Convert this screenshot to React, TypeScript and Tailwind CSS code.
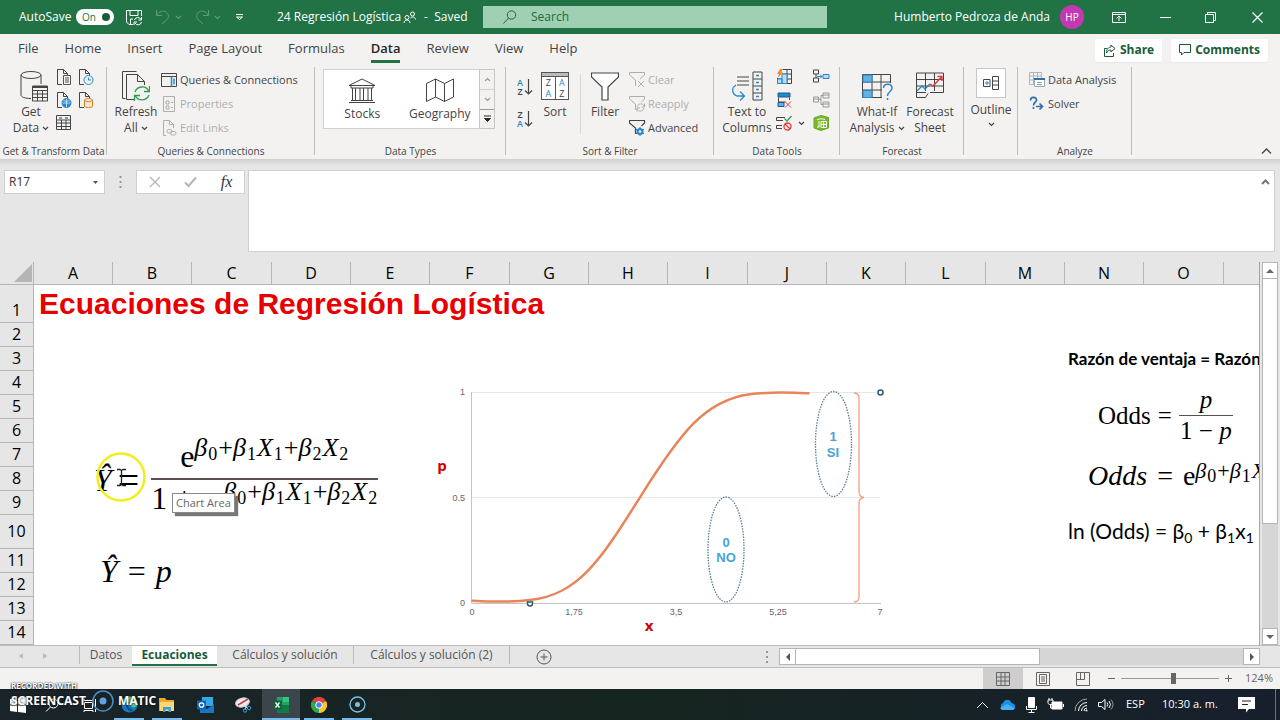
import type { ReactNode } from "react";

const columns = ["A", "B", "C", "D", "E", "F", "G", "H", "I", "J", "K", "L", "M", "N", "O"];

// Rows 1 and 10 are taller than the rest.
const rows = Array.from({ length: 14 }, (_, i) => i + 1);

const menuTabs = ["File", "Home", "Insert", "Page Layout", "Formulas", "Data", "Review", "View", "Help"];

function Icon({
  w = 16,
  h = 16,
  box,
  className = "",
  children,
}: {
  w?: number;
  h?: number;
  box?: string;
  className?: string;
  children: ReactNode;
}) {
  return (
    <svg
      width={w}
      height={h}
      viewBox={box ?? `0 0 ${w} ${h}`}
      fill="none"
      stroke="currentColor"
      aria-hidden="true"
      className={`shrink-0 ${className}`}
    >
      {children}
    </svg>
  );
}

function Chevron({ className = "" }: { className?: string }) {
  return (
    <Icon w={7} h={5} className={`inline-block ${className}`}>
      <path d="M1 1l2.500 2.500L6 1" strokeWidth="1.200" />
    </Icon>
  );
}

function TitleBar() {
  return (
    <header className="flex h-[34px] items-center bg-[#217346] text-[12px] text-white">
      <div className="flex w-[277px] shrink-0 items-center pl-[19px]">
        <label htmlFor="autosave" className="w-[57px]">
          AutoSave
        </label>
        <button
          id="autosave"
          role="switch"
          aria-checked="true"
          className="flex h-4 w-[38px] items-center justify-between rounded-full bg-white pl-1.5 pr-1 text-[10px] text-[#217346]"
        >
          On
          <span className="size-2 rounded-full bg-[#185c37]" />
        </button>
        <button aria-label="Save" className="ml-3">
          <Icon w={17} h={17}>
            <path d="M7 15.500H3L.5 13V1.500h15V7M4 1.500v5h8v-5M4.500 15.500V10H7" />
            <path d="M15.500 8v3h-3M8 16v-3h3M8.500 11a3.500 3.500 0 0 1 6.500-.5M15.500 13a3.500 3.500 0 0 1-6.500 1" />
          </Icon>
        </button>
        <button aria-label="Undo" className="ml-3 flex items-center gap-1 text-[#5c9c78]">
          <Icon w={16} h={16}>
            <path d="M1.500 1v5.500H7M2 6c2-3.500 6-5 9-3s3 5.500 1 7.500L7 15" />
          </Icon>
          <Chevron />
        </button>
        <button aria-label="Redo" className="ml-3 flex items-center gap-1 text-[#5c9c78]">
          <Icon w={16} h={16}>
            <path d="M14.500 1v5.500H9M14 6c-2-3.500-6-5-9-3s-3 5.500-1 7.500L9 15" />
          </Icon>
          <Chevron />
        </button>
        <button aria-label="Customize toolbar" className="ml-3.5">
          <Icon w={9} h={8}>
            <path d="M1 1.500h7M1.500 4l3 2.500 3-2.500z" />
          </Icon>
        </button>
      </div>
      <div className="flex w-[206px] shrink-0 items-center">
        <span>24 Regresión Logística</span>
        <Icon w={13} h={13} className="ml-0.5">
          <circle cx="4" cy="6.500" r="2" />
          <path d="M1 12c0-4 6-4 6 0" />
          <circle cx="9.500" cy="3" r="2" />
          <path d="M7.500 7c2-2 4.500-1 5 1.500" />
        </Icon>
        <span className="ml-2">-&nbsp; Saved</span>
      </div>
      <label className="flex h-[22px] max-w-[344px] flex-1 items-center bg-[#9fd0b3] pl-5 text-[#1d6b40]">
        <Icon w={14} h={14}>
          <circle cx="8.500" cy="5" r="4.200" />
          <path d="M5.500 8L.5 13.500" />
        </Icon>
        <input
          aria-label="Search"
          placeholder="Search"
          className="ml-3.5 w-full bg-transparent placeholder:text-[#1d6b40] focus:outline-none"
        />
      </label>
      <div className="ml-auto flex items-center pr-[17px]">
        <span>Humberto Pedroza de Anda</span>
        <span className="ml-2.5 flex size-6 items-center justify-center rounded-full bg-[#c239b3] text-[10px]">HP</span>
        <button aria-label="Ribbon display options" className="ml-7">
          <Icon w={14} h={11}>
            <path d="M.5.500h13v10H.5zM.5 2.500h13M7 9V4.500M4.500 6.500L7 4l2.500 2.500" />
          </Icon>
        </button>
        <button aria-label="Minimize" className="ml-[34px]">
          <Icon w={11} h={11}>
            <path d="M0 5.500h11" />
          </Icon>
        </button>
        <button aria-label="Restore" className="ml-[34px]">
          <Icon w={12} h={11}>
            <path d="M.5 2.500h8v8h-8zM2.500 2.500v-2h8v8h-2" />
          </Icon>
        </button>
        <button aria-label="Close" className="ml-[35px]">
          <Icon w={11} h={11}>
            <path d="M.5.500l10 10M10.500.500l-10 10" strokeWidth="1.200" />
          </Icon>
        </button>
      </div>
    </header>
  );
}

function MenuTabs() {
  return (
    <div className="flex h-8 items-center pl-[18px] pr-3 text-[13px]">
      <nav className="flex gap-[26px]">
        {menuTabs.map((tab) => (
          <button
            key={tab}
            className={
              tab === "Data"
                ? "h-[25px] border-b-3 border-[#217346] pb-0.5 font-semibold leading-5 text-[#262626]"
                : "h-[25px] border-b-3 border-transparent pb-0.5 leading-5"
            }
          >
            {tab}
          </button>
        ))}
      </nav>
      <div className="ml-auto flex gap-[9px] text-[12px] font-bold text-[#185c37]">
        <button className="flex h-[23px] items-center gap-1 rounded-xs bg-white px-2 shadow-xs">
          <Icon w={13} h={13}>
            <path d="M4 4.500H1.500v8h9V9M8 1l4 3.500L8 8V6C5.500 6 4.500 7 3.500 9c0-4 2-6 4.500-6z" />
          </Icon>
          Share
        </button>
        <button className="flex h-[23px] items-center gap-1 rounded-xs bg-white px-2 shadow-xs">
          <Icon w={12} h={12}>
            <path d="M.5.500h11v8H5l-2.500 2.500V8.500h-2z" />
          </Icon>
          Comments
        </button>
      </div>
    </div>
  );
}

function Group({ width, label, children }: { width: string; label?: string; children: ReactNode }) {
  return (
    <section className={`relative flex shrink-0 flex-col ${width}`}>
      <div className="flex h-[78px] items-start pt-0.5">{children}</div>
      <div className="h-4 text-center text-[10px] leading-4 text-[#444]">{label}</div>
      <span className="absolute right-0 top-px h-[88px] w-px bg-[#c0bebc]" />
    </section>
  );
}

function BigButton({ icon, children, className }: { icon: ReactNode; children: ReactNode; className: string }) {
  return (
    <button className={`flex flex-col items-center pt-0.5 text-center text-[12px] leading-4 ${className}`}>
      <span className="mb-0.5 flex h-8 items-center">{icon}</span>
      {children}
    </button>
  );
}

function SmallButton({ icon, children, disabled }: { icon: ReactNode; children: ReactNode; disabled?: boolean }) {
  return (
    <button disabled={disabled} className="flex h-6 items-center gap-0.5 whitespace-nowrap disabled:text-[#b0aeac]">
      {icon}
      {children}
    </button>
  );
}

const filePath = "M6 15.500H1.500V.500h6l4 4V7M7.500.500v4h4";

function Ribbon() {
  return (
    <div className="flex h-[94px] border-b border-[#d2d0ce] text-[11px]">
      <Group width="w-[107px]" label="Get & Transform Data">
        <BigButton
          className="w-[62px]"
          icon={
            <Icon w={28} h={31} className="ml-1.5">
              <path d="M1 4v20c0 2 4 3.500 10 3.500M21 4v9" />
              <ellipse cx="11" cy="4" rx="10" ry="3.500" />
              <path d="M12.500 15h15v15h-15zM12.500 19.500h15M12.500 23h15M12.500 26.500h15M17.500 19v11M22.500 19v11" />
              <path d="M12.500 16h15" strokeWidth="2" />
            </Icon>
          }
        >
          <span>Get</span>
          <span>
            Data <Chevron />
          </span>
        </BigButton>
        <div className="ml-[-6px] grid grid-cols-2 gap-x-1.5 gap-y-[7px] pt-px">
          <button aria-label="From Text/CSV">
            <Icon>
              <path d={filePath} />
              <path d="M7.500 6.500h7v9h-7zM9 9h4M9 11h4M9 13h4" stroke="#555" fill="none" />
            </Icon>
          </button>
          <button aria-label="Recent Sources">
            <Icon>
              <path d={filePath} />
              <circle cx="10.500" cy="11" r="4.500" fill="#f3f2f1" stroke="#2b88c8" />
              <path d="M10.500 8.500V11h2.500" stroke="#2b88c8" />
            </Icon>
          </button>
          <button aria-label="From Web">
            <Icon>
              <path d={filePath} />
              <circle cx="10.500" cy="11" r="4.500" fill="#2b88c8" stroke="#2b88c8" />
              <path d="M6.500 11h8M10.500 7v8M7.500 8.500c2 1 4 1 6 0" stroke="#d8ecf8" strokeWidth=".8" />
            </Icon>
          </button>
          <button aria-label="Existing Connections">
            <Icon>
              <path d={filePath} />
              <path d="M6.500 8v6.500c0 1.300 8 1.300 8 0V8" fill="#f8e3c8" stroke="#d8802a" />
              <ellipse cx="10.500" cy="8" rx="4" ry="1.500" fill="#f3f2f1" stroke="#d8802a" />
            </Icon>
          </button>
          <button aria-label="From Table/Range">
            <Icon>
              <path d="M.5.500h14v14H.5zM.5 5h14M.5 8h14M.5 11.500h14M5.500 5v9.500M10 5v9.500" />
              <path d="M3 3h3M9 3h3" stroke="#2b88c8" strokeWidth="1.500" />
            </Icon>
          </button>
        </div>
      </Group>

      <Group width="w-[208px]" label="Queries & Connections">
        <BigButton
          className="ml-1.5 w-[46px]"
          icon={
            <Icon w={28} h={31}>
              <path d="M3.500 27.500h-3V.500h14M12 28.500H4.500v-25h11l7 7V14M15.500 3.500v7h7" />
              <path
                d="M13 21c2-6 11-7 13.500-1M27.500 15v5.500H22M27 24c-2 6-11 6.500-13.500 1M12.500 30v-5.500H18"
                stroke="#2f9e52"
                strokeWidth="1.300"
              />
            </Icon>
          }
        >
          <span>Refresh</span>
          <span>
            All <Chevron />
          </span>
        </BigButton>
        <div className="ml-0.5">
          <SmallButton
            icon={
              <Icon w={17} h={15}>
                <path d="M.5.500h15v13H.5zM.5 3.500h15" />
                <path d="M10.500 3.500v10M13 5.500v6" stroke="#2b88c8" strokeWidth="1.500" />
              </Icon>
            }
          >
            Queries &amp; Connections
          </SmallButton>
          <SmallButton
            disabled
            icon={
              <Icon w={17} h={16}>
                <path d="M2.500.500h11v15h-11zM5 5h3v3H5zM5 10h3v3H5zM10 6.500h2M10 11.500h2" />
              </Icon>
            }
          >
            Properties
          </SmallButton>
          <SmallButton
            disabled
            icon={
              <Icon w={17} h={16}>
                <path d="M5 15.500H2.500V.500h6l4 4V8M8.500.500v4h4" />
                <rect x="6" y="9.500" width="5" height="3.500" rx="1.700" />
                <rect x="9.500" y="11.500" width="5.500" height="3.500" rx="1.700" />
              </Icon>
            }
          >
            Edit Links
          </SmallButton>
        </div>
      </Group>

      <Group width="w-[191px]" label="Data Types">
        <div className="ml-2 mt-px flex h-[60px] w-[172px] border border-[#d2d0ce] bg-white">
          <button className="flex w-[77px] flex-col items-center pt-2 text-[12px] leading-4">
            <Icon w={28} h={26} className="mb-0.5">
              <path d="M1 7.500L14 1l13 6.500zM3 8v2h22V8M1 24.500h26M3 22.500h22M4.500 10v12M7.500 10v12M12 10v12M15.500 10v12M20 10v12M23.500 10v12" />
            </Icon>
            Stocks
          </button>
          <button className="flex w-[79px] flex-col items-center pt-2 text-[12px] leading-4">
            <Icon w={28} h={26} className="mb-0.5">
              <path d="M.5 5.500l9-4.500 9 4.500L27.500 1v18l-9 4.500-9-4.500-9 4.500zM9.500 1v18M18.500 5.500v18" />
            </Icon>
            Geography
          </button>
          <div className="-my-px -mr-px flex w-4 flex-col border border-[#c8c6c4] bg-[#f3f2f1] text-[#999]">
            <button aria-label="Previous" className="flex h-5 items-center justify-center border-b border-[#d2d0ce]">
              <Chevron className="rotate-180" />
            </button>
            <button aria-label="Next" className="flex h-5 items-center justify-center border-b border-[#999]">
              <Chevron />
            </button>
            <button aria-label="More types" className="flex flex-1 items-center justify-center text-[#262626]">
              <Icon w={9} h={8}>
                <path d="M1 1h7M1.500 3.500l3 3 3-3z" fill="currentColor" />
              </Icon>
            </button>
          </div>
        </div>
      </Group>

      <Group width="w-[208px]" label="Sort & Filter">
        <div className="ml-2.5 flex flex-col gap-3.5 pt-2.5">
          {["AZ", "ZA"].map((order) => (
            <button
              key={order}
              aria-label={order === "AZ" ? "Sort ascending" : "Sort descending"}
              className="flex items-center"
            >
              <span className="flex w-2 flex-col text-[9px] font-semibold leading-[9px]">
                <span className={order === "AZ" ? "text-[#2b88c8]" : ""}>{order[0]}</span>
                <span className={order === "ZA" ? "text-[#2b88c8]" : ""}>{order[1]}</span>
              </span>
              <Icon w={9} h={18}>
                <path d="M4.500 1v15M1 12.500L4.500 16 8 12.500" strokeWidth="1.200" />
              </Icon>
            </button>
          ))}
        </div>
        <BigButton
          className="ml-[3px] w-[38px]"
          icon={
            <span className="flex h-7 w-7 flex-col border border-[#555] bg-white">
              <span className="h-1 border-b border-[#555] bg-[#bbb]" />
              <span className="flex flex-1 text-[9px] leading-[11px]">
                <span className="flex flex-1 flex-col border-r border-[#555]">
                  <span>Z</span>
                  <span className="text-[#2b88c8]">A</span>
                </span>
                <span className="flex flex-1 flex-col">
                  <span className="text-[#2b88c8]">A</span>
                  <span>Z</span>
                </span>
              </span>
            </span>
          }
        >
          Sort
        </BigButton>
        <span className="ml-1.5 mt-1.5 h-[60px] w-px bg-[#d8d6d4]" />
        <BigButton
          className="ml-1 w-10"
          icon={
            <Icon w={28} h={29}>
              <path d="M.5 1h27v4L17 15v13h-6V15L.5 5z" strokeWidth="1.200" fill="#fff" />
            </Icon>
          }
        >
          Filter
        </BigButton>
        <div className="ml-1">
          <SmallButton
            disabled
            icon={
              <Icon w={17} h={16}>
                <path d="M6.500 14V8L.5 3V.500h15V3l-4.500 4M9 9l6 6M15 9l-6 6" />
              </Icon>
            }
          >
            Clear
          </SmallButton>
          <SmallButton
            disabled
            icon={
              <Icon w={17} h={16}>
                <path d="M6.500 14V8L.5 3V.500h15V3l-3 3M8 11c1-4 6-4 7-1M15.500 7.500V11h-3M15 12c-1 4-6 4-7 1M8 15.500V12h3" />
              </Icon>
            }
          >
            Reapply
          </SmallButton>
          <SmallButton
            icon={
              <Icon w={17} h={16}>
                <path d="M6.500 14V8L.5 3V.500h15V3l-3 3" strokeWidth="1.200" />
                <circle cx="11" cy="11.500" r="2.500" stroke="#2b88c8" strokeWidth="2" />
                <path d="M11 7v9M7 9.200l8 4.600M15 9.200l-8 4.600" stroke="#2b88c8" strokeWidth="1.200" />
                <circle cx="11" cy="11.500" r="1.200" fill="#f3f2f1" stroke="none" />
              </Icon>
            }
          >
            Advanced
          </SmallButton>
        </div>
      </Group>

      <Group width="w-[126px]" label="Data Tools">
        <BigButton
          className="ml-2 w-[50px]"
          icon={
            <Icon w={31} h={30}>
              <path d="M5 6h12M5 10h12M5 14h12M21 1h9v28h-9zM21 8h9M21 15h9M21 22h9" />
              <path
                d="M4 14c-5 3-4 9 1 11h7M8 20.500l4.500 4.500L8 29.500M24 4.500h3M24 11.500h3M24 18.500h3M24 25.500h3"
                stroke="#2b88c8"
                strokeWidth="1.300"
              />
            </Icon>
          }
        >
          <span>Text to</span>
          <span>Columns</span>
        </BigButton>
        <div className="ml-1 grid grid-cols-[37px_17px] gap-y-[7px] pt-px">
          <button aria-label="Flash Fill">
            <Icon>
              <path d="M7 .500h8.500v14H1.500V9M6 5h9M1.500 10h14M6 9.500v5M11 .500v14" />
              <path d="M6 5h5v9.500H6zM1.500 10H6v4.500H1.500z" fill="#b9dcf2" stroke="#2b88c8" />
              <path d="M4 0h3L5 3.500h2L1.500 9 3 5H1z" fill="#f08a24" stroke="none" />
            </Icon>
          </button>
          <button aria-label="Consolidate">
            <Icon w={17}>
              <path d="M.5 1h5v4h-5zM.5 9h5v4h-5zM3 5v4" />
              <path d="M10 5.500h6v4h-6z" fill="#b9dcf2" stroke="#2b88c8" />
              <path d="M4 7.500h5M7 5.500l2 2-2 2" stroke="#2b88c8" />
            </Icon>
          </button>
          <button aria-label="Remove Duplicates">
            <Icon>
              <path d="M2.500 5.500v5M13.500 5.500V8M2.500 10h7" />
              <path d="M2 1h12v4H2z" fill="#2b88c8" stroke="#1c5a91" />
              <path d="M2 10.500h6v4H2z" fill="#62b0e4" stroke="#1c5a91" />
              <path d="M9 9.500l6 6M15 9.500l-6 6" stroke="#e03a3a" />
            </Icon>
          </button>
          <button aria-label="Relationships" className="text-[#999]">
            <Icon w={17}>
              <path d="M.5 5h5v5h-5zM10 1h6v5h-6zM10 10h6v5h-6zM5.500 7.500H8M8 3.500v9M8 3.500h2M8 12.500h2M10 3h6M10 12h6M.5 7h5" />
            </Icon>
          </button>
          <button aria-label="Data Validation" className="flex items-center">
            <Icon>
              <path d="M9 2.500H.500v3H7M6 10.500H.5v3H6" />
              <path d="M8.500 3.500L11 6l4.500-5" stroke="#2f9e52" strokeWidth="1.300" />
              <circle cx="11.500" cy="11.500" r="3.500" stroke="#e03a3a" strokeWidth="1.300" />
              <path d="M9 9l5 5" stroke="#e03a3a" strokeWidth="1.300" />
            </Icon>
            <Chevron className="ml-1.5" />
          </button>
          <button aria-label="Manage Data Model">
            <Icon w={17}>
              <path d="M1 3l7-2.500 7.500 2V13L8 15.500 1 13z" fill="#7ab829" stroke="#6aa522" />
              <path d="M4 5c2-1.500 5-1.500 8-.5M8 6.500h5.500v6H8zM8 9.500h5.500M10.700 6.500v6M6 6v6H4" stroke="#fff" />
            </Icon>
          </button>
        </div>
      </Group>

      <Group width="w-[124px]" label="Forecast">
        <BigButton
          className="ml-1.5 w-[62px]"
          icon={
            <Icon w={31} h={29}>
              <path d="M.5 2.500h28v23H.5zM10 2.500v23M19 2.500v23M.5 10h28M.5 18h28" />
              <path d="M1 3h9v7H1zM1 18.500h9v7H1z" fill="#62b0e4" stroke="#2b88c8" />
              <path d="M20 11h11v18H20z" fill="#f3f2f1" stroke="none" />
              <path d="M21.500 16c0-5 8.500-5 8.500 0 0 4-4.500 3.500-4.500 8M25.500 26v2" stroke="#2b88c8" strokeWidth="1.500" />
            </Icon>
          }
        >
          <span>What-If</span>
          <span>
            Analysis <Chevron />
          </span>
        </BigButton>
        <BigButton
          className="-ml-1 w-[52px]"
          icon={
            <Icon w={29} h={28}>
              <path d="M10 20.500H.5V1h27v19.500H14M9.500 1v18M18.500 1v18M.5 7.500h27M.5 14h27M.5 20v5.500h9l2.500-4M19 20.500h8" />
              <path d="M1 19l5-5 3 3 5-5" stroke="#2b88c8" strokeWidth="1.400" />
              <path d="M14 12l3 2 9-9.500M21.500 4.500H26V9" stroke="#e03a3a" strokeWidth="1.400" />
            </Icon>
          }
        >
          <span>Forecast</span>
          <span>Sheet</span>
        </BigButton>
      </Group>

      <Group width="w-[54px]">
        <button className="flex w-full flex-col items-center text-[12px] leading-6">
          <span className="flex size-[30px] items-center justify-center border border-[#c8c6c4] bg-white">
            <Icon w={16} h={15}>
              <path d="M9.500.500h6v13h-6zM9.500 5h6M9.500 9h6M7 3.500H.5v7H7M7 3.500v7" />
              <path d="M2 7h4M4 5v4" stroke="#2b88c8" />
            </Icon>
          </span>
          Outline
          <Chevron />
        </button>
      </Group>

      <Group width="w-[114px]" label="Analyze">
        <div className="ml-[11px]">
          <SmallButton
            icon={
              <Icon w={17}>
                <path d="M.5.500h12v12H.5zM.5 4h12M.5 8h12M4.500.500v12M8.500.500v12" stroke="#b5b5b5" />
                <path d="M5.500 6.500h10v8h-10z" fill="#fff" stroke="#8fa8bd" />
                <path d="M5 7h11" stroke="#2f6fa8" strokeWidth="2" />
                <path d="M8 10.500h5M8 12.500h5" stroke="#999" />
              </Icon>
            }
          >
            Data Analysis
          </SmallButton>
          <SmallButton
            icon={
              <Icon w={17}>
                <path
                  d="M1.500 4.500c0-4 6-4 6-.5 0 2.500-3 2.500-3 5.500M4.500 11v2M7 10.500h6M10.500 7.500l3 3-3 3"
                  stroke="#2f6fa8"
                  strokeWidth="1.700"
                />
              </Icon>
            }
          >
            Solver
          </SmallButton>
        </div>
      </Group>
      <button aria-label="Collapse the ribbon" className="ml-auto mr-2 mt-auto mb-1">
        <Icon w={11} h={7}>
          <path d="M1 5.500L5.500 1 10 5.500" strokeWidth="1.300" />
        </Icon>
      </button>
    </div>
  );
}

function FormulaBar() {
  return (
    <div className="flex h-[102px] items-start bg-[#e6e6e6] bg-linear-to-b from-[#d4d4d4] to-[#e6e6e6] to-[6px] pl-1 pr-[5px] pt-2.5">
      <div className="flex h-6 w-[101px] items-center border border-[#d0d0d0] bg-white pr-1.5">
        <input aria-label="Name box" defaultValue="R17" className="w-full min-w-0 pl-1 text-[12px] text-[#333]" />
        <Icon w={5} h={3}>
          <path d="M0 0h5L2.500 3z" fill="#555" stroke="none" />
        </Icon>
      </div>
      <Icon w={31} h={24} className="text-[#999]">
        <path d="M15.500 6v14" strokeWidth="2" strokeDasharray="2 3" />
      </Icon>
      <div className="flex h-6 w-[109px] items-center justify-around border border-[#d0d0d0] bg-white text-[#b5b5b5]">
        <button aria-label="Cancel">
          <Icon w={12} h={12}>
            <path d="M1 1l10 10M11 1L1 11" strokeWidth="1.300" />
          </Icon>
        </button>
        <button aria-label="Enter">
          <Icon w={13} h={12}>
            <path d="M1 6.500L4.500 10 12 1.500" strokeWidth="2" />
          </Icon>
        </button>
        <button
          aria-label="Insert function"
          className="font-['Liberation_Serif'] text-[16px] italic leading-5 text-[#333]"
        >
          fx
        </button>
      </div>
      <div className="ml-[3px] flex h-[82px] flex-1 border border-[#d0d0d0] bg-white">
        <textarea aria-label="Formula" className="flex-1 resize-none" />
        <button aria-label="Collapse formula bar" className="mr-1 mt-2 self-start text-[#777]">
          <Icon w={9} h={6}>
            <path d="M1 5l3.500-3.500L8 5" strokeWidth="2" />
          </Icon>
        </button>
      </div>
    </div>
  );
}

function Sub({ children }: { children: ReactNode }) {
  return <sub className="bottom-[-4px] px-px text-[18px] not-italic leading-none">{children}</sub>;
}

function LinearPredictor({ className = "" }: { className?: string }) {
  return (
    <span className={`whitespace-nowrap ${className}`}>
      β<Sub>0</Sub>
      <span className="not-italic">+</span>β<Sub>1</Sub>X<Sub>1</Sub>
      <span className="not-italic">+</span>β<Sub>2</Sub>X<Sub>2</Sub>
    </span>
  );
}

// Formulas float above the cells, like the text boxes of the workbook.
function Equations() {
  return (
    <div className="font-['Liberation_Serif'] text-black">
      <div className="absolute left-[94px] top-[171px] flex items-center text-[32px] italic leading-9">
        <span>Ŷ</span>
        <span className="ml-1.5 mr-3 text-[38px] not-italic">=</span>
        <span className="flex w-[227px] flex-col">
          <span className="flex h-[47px] items-end justify-center border-b-2 border-[#5d5050] not-italic">
            <span className="pb-1">e</span>
            <LinearPredictor className="pb-3 text-[26px] italic" />
          </span>
          <span className="flex h-[47px] justify-between not-italic">
            <span>1 + e</span>
            <LinearPredictor className="text-[26px] italic leading-6" />
          </span>
        </span>
      </div>
      <div className="absolute left-[100px] top-[291px] flex gap-2.5 text-[32px] italic leading-9">
        <span>Ŷ</span>
        <span className="not-italic">=</span>
        <span>p</span>
      </div>
      <div className="absolute left-[1098px] top-[123px] flex items-center gap-[7px] text-[25px] leading-[30px]">
        <span>Odds</span>
        <span>=</span>
        <span className="flex w-[54px] flex-col text-center">
          <i className="border-b border-[#5d5050]">p</i>
          <span>
            1 − <i>p</i>
          </span>
        </span>
      </div>
      <div className="absolute left-[1088px] top-[194px] flex items-start whitespace-nowrap text-[28px] leading-10">
        <i>Odds</i>
        <span className="mx-2.5">=</span>
        <span>e</span>
        <LinearPredictor className="text-[22px] italic leading-[30px]" />
      </div>
    </div>
  );
}

// Plot area runs from (472, 392) to (881, 603) in sheet units.
function LogisticChart() {
  return (
    <svg
      viewBox="430 380 470 260"
      className="absolute left-[430px] top-[118px] h-[260px] w-[470px] font-['Liberation_Sans']"
      fill="none"
    >
      <path d="M472 392.500h408M472 497.500h408" stroke="#e4e8e8" />
      <path d="M471.500 392v211.500H881" stroke="#c4c4c4" />
      <path
        d="M471.500 600.700C495 602 515 602 530 600C578 595 600 561 640 497.300C680 433.300 705 400 750 394.300C770 391.500 790 392.500 809.500 393.300"
        stroke="#e8845a"
        strokeWidth="2.500"
      />
      <path
        d="M854 393c4 0 5 2 5 5v94c0 3 1 5 5 5.500-4 .5-5 2.500-5 5.500v94c0 3-1 5-5 5"
        stroke="#f0a080"
        strokeWidth="1.300"
      />
      <g stroke="#5b7f8e" strokeWidth="1.300" strokeDasharray="1.500 1.200">
        <ellipse cx="833.500" cy="444" rx="18" ry="52.500" />
        <ellipse cx="726" cy="549.500" rx="18" ry="52.500" />
      </g>
      <g stroke="#2c5a6e" strokeWidth="1.500" fill="#fff">
        <circle cx="880.500" cy="392.500" r="2.500" />
        <path d="M527.500 603.500a2.500 2.500 0 0 0 5 0v-1.500h-5z" />
      </g>
      <g fill="#666" fontSize="9" textAnchor="end">
        <text x="465" y="395">1</text>
        <text x="465" y="501">0.5</text>
        <text x="465" y="606">0</text>
      </g>
      <g fill="#666" fontSize="9" textAnchor="middle">
        <text x="472" y="615">0</text>
        <text x="574" y="615">1,75</text>
        <text x="676" y="615">3,5</text>
        <text x="778" y="615">5,25</text>
        <text x="880" y="615">7</text>
      </g>
      <g fill="#47a3da" fontSize="13" fontWeight="bold" textAnchor="middle">
        <text x="833" y="441">1</text>
        <text x="833" y="457">SI</text>
        <text x="726" y="547">0</text>
        <text x="726" y="562">NO</text>
      </g>
      <g fill="#d00000" fontSize="15" fontWeight="bold" textAnchor="middle" className="font-['Open_Sans']">
        <text x="442" y="471">p</text>
        <text x="649" y="631">x</text>
      </g>
    </svg>
  );
}

function Pointer() {
  return (
    <>
      <span className="absolute left-[172px] top-[231px] border border-[#8a8a8a] bg-white px-[3px] text-[11px] leading-[18px] text-[#666] shadow-[3px_3px_1px_#777]">
        Chart Area
      </span>
      <Icon w={50} h={50} className="absolute left-24 top-[190px]">
        <circle cx="25" cy="25" r="23.500" stroke="#f0ee1e" strokeWidth="2.500" />
        <path d="M21 17.500h3l1.500 1 1.500-1h3M21 33.500h3l1.500-1 1.500 1h3M25.500 18v15" stroke="#222" strokeWidth="1.300" />
      </Icon>
    </>
  );
}

function rowHeight(row: number) {
  if (row === 1) return "h-[38px] align-bottom";
  if (row === 10) return "h-[34px]";
  return "h-6";
}

function Sheet() {
  return (
    <main className="flex flex-1 bg-[#e6e6e6]">
      <div className="relative min-w-0 flex-1 overflow-hidden border-r border-[#a6a6a6] bg-white">
        <table className="w-full table-fixed border-separate border-spacing-0 text-black">
          <colgroup>
            <col className="w-[34px]" />
            {columns.map((c, i) => (
              <col key={c} className={i % 3 === 2 ? "w-20" : "w-[79px]"} />
            ))}
            <col />
          </colgroup>
          <thead>
            <tr className="h-[23px] bg-[#e6e6e6]">
              <th aria-label="Select all" className="border-b border-r border-[#b5b5b5] p-0">
                <Icon w={18} h={18} className="ml-auto mr-px">
                  <path d="M18 0v18H0z" fill="#b5b5b5" stroke="none" />
                </Icon>
              </th>
              {columns.map((c) => (
                <th key={c} className="border-b border-r border-[#b5b5b5] p-0 text-[16px] font-normal leading-[22px]">
                  {c}
                </th>
              ))}
              <th className="border-b border-[#b5b5b5] p-0" />
            </tr>
          </thead>
          <tbody>
            {rows.map((row) => (
              <tr key={row} className={rowHeight(row)}>
                <th className="border-b border-r border-[#b5b5b5] bg-[#e6e6e6] p-0 text-[16px] font-normal leading-[23px]">
                  {row}
                </th>
                <td colSpan={16} className="p-0">
                  {row === 1 && (
                    <div className="whitespace-nowrap pl-[5px] font-['Liberation_Sans'] text-[30px] font-bold leading-[38px] text-[#e80000]">
                      Ecuaciones de Regresión Logística
                    </div>
                  )}
                </td>
              </tr>
            ))}
          </tbody>
        </table>
        <div className="absolute left-[1068px] top-[85px] whitespace-nowrap font-['Lato'] text-[17px] font-bold leading-6 text-black">
          Razón de ventaja = Razón
        </div>
        <div className="absolute left-[1068px] top-[253px] whitespace-nowrap font-['Lato'] text-[21px] leading-8 text-black">
          ln (Odds) = β<sub className="text-[14px]">0</sub> + β<sub className="text-[14px]">1</sub>x
          <sub className="text-[14px]">1</sub>
        </div>
        <Equations />
        <LogisticChart />
        <Pointer />
      </div>
      <div className="ml-0.5 mr-0.5 flex w-4 flex-col bg-[#d6d6d6] text-[#666]">
        <button
          aria-label="Scroll up"
          className="flex h-[17px] items-center justify-center border border-[#b5b5b5] bg-white"
        >
          <Icon w={8} h={4}>
            <path d="M0 4l4-4 4 4z" fill="currentColor" stroke="none" />
          </Icon>
        </button>
        <div className="h-[245px] border-x border-b border-[#b5b5b5] bg-white" />
        <button
          aria-label="Scroll down"
          className="mt-auto flex h-[17px] items-center justify-center border border-[#b5b5b5] bg-white"
        >
          <Icon w={8} h={4}>
            <path d="M0 0l4 4 4-4z" fill="currentColor" stroke="none" />
          </Icon>
        </button>
      </div>
    </main>
  );
}

function SheetTabs() {
  return (
    <div className="flex h-[23px] items-start border-y border-[#bdbdbd] bg-[#e6e6e6] text-[12px] leading-[18px] text-[#555]">
      <div className="flex h-5 w-[79px] items-center gap-[18px] pl-[19px] text-[#bbb]">
        <Icon w={5} h={6}>
          <path d="M4 0v6L0 3z" fill="currentColor" stroke="none" />
        </Icon>
        <Icon w={5} h={6}>
          <path d="M1 0v6l4-3z" fill="currentColor" stroke="none" />
        </Icon>
      </div>
      <button className="w-[53px] border-l border-[#bbb]">Datos</button>
      <button className="w-[85px] border-b-2 border-[#217346] bg-white font-bold text-[#185c37]">Ecuaciones</button>
      <button className="w-[137px] border-r border-[#bbb]">Cálculos y solución</button>
      <button className="w-[156px] border-r border-[#bbb]">Cálculos y solución (2)</button>
      <button aria-label="New sheet" className="ml-[26px] mt-[3px]">
        <Icon>
          <circle cx="8" cy="8" r="7" />
          <path d="M8 4.500v7M4.500 8h7" />
        </Icon>
      </button>
      <div className="ml-auto flex w-[514px] pt-0.5">
        <Icon w={13} h={17} className="text-[#999]">
          <path d="M1 3v12" strokeWidth="2" strokeDasharray="2 3" />
        </Icon>
        <div className="mr-5 flex h-[17px] flex-1 bg-[#d6d6d6] text-[#555]">
          <button
            aria-label="Scroll left"
            className="flex w-[17px] items-center justify-center border border-[#b5b5b5] bg-white"
          >
            <Icon w={4} h={8}>
              <path d="M4 0v8L0 4z" fill="currentColor" stroke="none" />
            </Icon>
          </button>
          <div className="w-[244px] border-y border-r border-[#b5b5b5] bg-white" />
          <button
            aria-label="Scroll right"
            className="ml-auto flex w-[17px] items-center justify-center border border-[#b5b5b5] bg-white"
          >
            <Icon w={4} h={8}>
              <path d="M0 0v8l4-4z" fill="currentColor" stroke="none" />
            </Icon>
          </button>
        </div>
      </div>
    </div>
  );
}

function StatusBar() {
  return (
    <footer className="flex h-[21px] items-center justify-end bg-[#f3f2f1] pr-[7px] text-[#666]">
      <button aria-label="Normal view" className="flex h-full w-10 items-center justify-center bg-[#cfcdcd]">
        <Icon w={14} h={14}>
          <path d="M.5.500h13v13H.5zM5 .500v13M9 .500v13M.5 5h13M.5 9h13" />
        </Icon>
      </button>
      <button aria-label="Page layout view" className="flex h-full w-10 items-center justify-center">
        <Icon w={14} h={14}>
          <path d="M.5.500h13v13H.5zM3.500 2.500h7v9h-7zM5 5h4M5 7h4M5 9h4" />
        </Icon>
      </button>
      <button aria-label="Page break view" className="flex h-full w-10 items-center justify-center">
        <Icon w={14} h={14}>
          <path d="M.5.500h13v13H.5zM.5 7.500h8v-7M4.500.500v7" />
        </Icon>
      </button>
      <button aria-label="Zoom out" className="ml-1">
        <Icon w={9} h={9}>
          <path d="M1 4.500h7" />
        </Icon>
      </button>
      <input
        type="range"
        aria-label="Zoom"
        min={0}
        max={100}
        defaultValue={54}
        className="mx-[5px] h-3 w-[98px] appearance-none bg-linear-to-b from-[#999] to-[#999] bg-[length:100%_1px] bg-center bg-no-repeat [&::-webkit-slider-thumb]:h-[11px] [&::-webkit-slider-thumb]:w-[5px] [&::-webkit-slider-thumb]:appearance-none [&::-webkit-slider-thumb]:bg-[#666]"
      />
      <button aria-label="Zoom in">
        <Icon w={9} h={9}>
          <path d="M1 4.500h7M4.500 1v7" />
        </Icon>
      </button>
      <span className="ml-3 text-[11px]">124%</span>
    </footer>
  );
}

function TaskButton({ name, state, children }: { name: string; state?: "open" | "active"; children: ReactNode }) {
  return (
    <button
      aria-label={name}
      className={`relative flex h-full w-[38px] items-center justify-center ${state === "active" ? "bg-[#3b454b]" : ""}`}
    >
      {children}
      {state && (
        <span className={`absolute bottom-0 h-0.5 bg-[#76b9ed] ${state === "active" ? "inset-x-0" : "inset-x-1"}`} />
      )}
    </button>
  );
}

function TaskBar() {
  return (
    <div className="flex h-[31px] items-center bg-linear-to-r from-[#1a2329] via-[#15251f] to-[#171f2d] text-white">
      <button aria-label="Start" className="flex w-9 justify-center">
        <Icon>
          <path d="M0 2l7-1v6.500H0zM8 1l8-1v7.500H8zM0 8.500h7V15l-7-1zM8 8.500h8V16l-8-1z" fill="#fff" stroke="none" />
        </Icon>
      </button>
      <button aria-label="Search Windows" className="flex w-8 justify-center">
        <Icon w={14} h={14}>
          <circle cx="8.500" cy="5.500" r="4.500" />
          <path d="M5.500 9L1 13.500" />
        </Icon>
      </button>
      <button aria-label="Task view" className="flex w-[42px] justify-center">
        <Icon w={15} h={14}>
          <path d="M2.500 4.500h8v6h-8zM2 1v1.500h9V1M2 14v-1.500h9V14M13.500 1v8M13.500 11v3" />
        </Icon>
      </button>
      <TaskButton name="Edge" state="open">
        <Icon w={17} h={17}>
          <circle cx="8.500" cy="8.500" r="8" fill="#1b78c8" stroke="none" />
          <path
            d="M.5 8.500C1 2 6 0 10 .800c5 1 7 5.200 6.500 8-.8 2.800-5.500 3.200-6 1.200.8-2.500-.5-4-3-4S1 7 .5 8.500z"
            fill="#4fcf83"
            stroke="none"
          />
          <path d="M7 7c-2 2-1 7 4.500 7.500" stroke="#0e4a80" strokeWidth="2" />
        </Icon>
      </TaskButton>
      <TaskButton name="File Explorer" state="open">
        <Icon w={16} h={14}>
          <path d="M0 0h6l1.500 2H15v11H0z" fill="#eaa92b" stroke="none" />
          <path d="M1 4h14v9H1z" fill="#ffd970" stroke="none" />
          <path d="M4 14V9h8v5h-2.500v-2.500h-3V14z" fill="#3b9be0" stroke="none" />
        </Icon>
      </TaskButton>
      <TaskButton name="Outlook">
        <Icon w={17} h={16}>
          <path d="M5 0h11v9H5z" fill="#32a9e8" stroke="none" />
          <path d="M3 8l7 4 7-5v9H3z" fill="#1378c6" stroke="none" />
          <path d="M0 3.500h9v9H0z" fill="#0f62b5" stroke="none" />
          <circle cx="4.500" cy="8" r="2.200" stroke="#fff" strokeWidth="1.300" />
        </Icon>
      </TaskButton>
      <TaskButton name="Snipping Tool">
        <Icon w={17} h={16}>
          <ellipse cx="7.500" cy="5.500" rx="7" ry="4.500" fill="#eee" stroke="#ccc" transform="rotate(-15 7.500 5.500)" />
          <path d="M3 8l10-6" stroke="#c43c4c" strokeWidth="1.500" />
          <path d="M8 7l5 5M12 6l-2 7" stroke="#ddd" />
          <circle cx="14" cy="11" r="1.700" stroke="#3b9be0" />
          <circle cx="10" cy="13.500" r="1.700" stroke="#3b9be0" />
        </Icon>
      </TaskButton>
      <TaskButton name="Excel" state="active">
        <Icon w={17} h={16}>
          <path d="M4 0h12v16H4z" fill="#21a366" stroke="none" />
          <path d="M4 8h12v8H4z" fill="#107c41" stroke="none" />
          <path d="M10 0h6v5h-6z" fill="#33c481" stroke="none" />
          <path d="M0 3.500h9v9H0z" fill="#0e6634" stroke="none" />
          <path d="M2.500 5.500l4 5M6.500 5.500l-4 5" stroke="#fff" strokeWidth="1.300" />
        </Icon>
      </TaskButton>
      <TaskButton name="Chrome" state="open">
        <Icon>
          <path d="M8 8L1 4a8 8 0 0 1 14 0z" fill="#e0443a" stroke="none" />
          <path d="M8 8l7-4a8 8 0 0 1-7 12z" fill="#f9c52c" stroke="none" />
          <path d="M8 8v8A8 8 0 0 1 1 4z" fill="#35a551" stroke="none" />
          <circle cx="8" cy="8" r="3.300" fill="#4285f4" stroke="#fff" />
        </Icon>
      </TaskButton>
      <TaskButton name="Screencast-O-Matic" state="open">
        <Icon w={17} h={17}>
          <circle cx="8.500" cy="8.500" r="7.500" stroke="#7fc0e0" strokeWidth="1.300" />
          <circle cx="8.500" cy="8.500" r="2.500" fill="#7fc0e0" stroke="none" />
        </Icon>
      </TaskButton>

      <div className="ml-auto flex h-full items-center gap-2.5 text-[11px]">
        <Icon w={13} h={8}>
          <path d="M1 7l5.500-5.500L12 7" />
        </Icon>
        <Icon w={17} h={11}>
          <path d="M4 10.500a3.500 3.500 0 0 1 0-6.500C6-.5 11-.5 12.500 4c5 .5 4.500 6.500 1 6.500z" fill="#1d8fe0" stroke="none" />
          <path d="M1 9l7-4 8 4.500-2 1.500H3z" fill="#45b2f5" stroke="none" />
        </Icon>
        <Icon w={11} h={16}>
          <rect x="2" y="0" width="7" height="11" rx="1" fill="#fff" stroke="none" />
          <path d="M.5 9v3.500h10V9M5.500 12.500V15M2.500 15.500h6" />
        </Icon>
        <Icon w={17} h={13}>
          <path d="M5 4h10v7H5z" fill="#fff" />
          <path d="M16.500 6v3M1 2h5v3c0 2-5 2-5 0zM2 0v2M5 0v2M3.500 6v4H5" />
        </Icon>
        <Icon w={14} h={14}>
          <path d="M1 13A12 12 0 0 1 13 1" opacity=".6" />
          <path d="M4.500 13A8.500 8.500 0 0 1 13 4.500M7.500 13A5.500 5.500 0 0 1 13 7.500M10 13a3 3 0 0 1 3-3" />
          <circle cx="12.500" cy="12.500" r="1" fill="#fff" stroke="none" />
        </Icon>
        <Icon w={16} h={13}>
          <path d="M.5 4.500h3l3.500-3v10l-3.500-3h-3z" />
          <path d="M9 4.500q1.500 2 0 4M11 3q3 3.500 0 7" />
          <path d="M13 1.500q4 5 0 10" opacity=".5" />
        </Icon>
        <span className="ml-0.5 w-[22px]">ESP</span>
        <time className="ml-1 w-[66px]">10:30 a. m.</time>
        <Icon w={17} h={16}>
          <path d="M0 0h17v12h-6l-3 3.500V12H0z" fill="#fff" stroke="none" />
          <path d="M4 4h9M4 7.500h6" stroke="#1a2329" />
        </Icon>
        <span className="ml-2.5 mr-1 h-full w-px bg-[#6b7280]" />
      </div>
    </div>
  );
}

function Watermark() {
  return (
    <div className="pointer-events-none absolute bottom-2 left-[11px] font-bold text-white">
      <div className="text-[8px] leading-2 [text-shadow:0_0_2px_#000,0_1px_1px_#000]">RECORDED WITH</div>
      <div className="flex items-center text-[12px] leading-[22px] [text-shadow:0_0_2px_#000]">
        <span className="w-[81px]">SCREENCAST</span>
        <Icon w={22} h={22}>
          <circle cx="11" cy="11" r="10" stroke="#4a8fc4" strokeWidth="1.500" />
          <circle cx="11" cy="11" r="3.500" fill="#5ba6e0" stroke="none" />
        </Icon>
        <span className="ml-1">MATIC</span>
      </div>
    </div>
  );
}

export default function App() {
  return (
    <div className="relative flex min-h-screen flex-col overflow-hidden bg-[#f3f2f1] font-['Open_Sans',sans-serif] text-[#444]">
      <TitleBar />
      <MenuTabs />
      <Ribbon />
      <FormulaBar />
      <Sheet />
      <SheetTabs />
      <StatusBar />
      <TaskBar />
      <Watermark />
    </div>
  );
}
